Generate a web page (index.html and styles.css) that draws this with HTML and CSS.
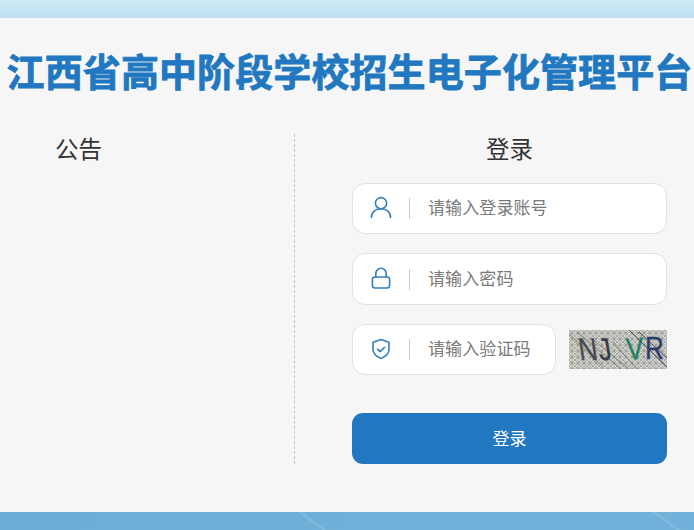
FILE: index.html
```html
<!DOCTYPE html>
<html lang="zh-CN">
<head>
    <meta charset="UTF-8">
    <meta name="viewport" content="width=device-width, initial-scale=1.0">
    <title>江西省高中阶段学校招生电子化管理平台</title>
    <link rel="stylesheet" href="styles.css">
</head>
<body>
    <div class="band band-top"></div>

    <div class="main">
        <h1 class="title">江西省高中阶段学校招生电子化管理平台</h1>

        <div class="columns">
            <div class="notice">
                <h2 class="col-title">公告</h2>
            </div>

            <form class="login">
                <h2 class="col-title">登录</h2>

                <div class="field">
                    <svg class="field-icon" viewBox="0 0 24 24">
                        <circle cx="12" cy="7.200" r="5.600"/>
                        <path d="M2.400 21.500c0-5.400 4.200-8.700 9.600-8.700s9.600 3.300 9.600 8.700"/>
                    </svg>
                    <input type="text" placeholder="请输入登录账号">
                </div>

                <div class="field field-tall">
                    <svg class="field-icon" viewBox="0 0 24 24">
                        <rect x="3.400" y="11" width="17.200" height="11" rx="2.500"/>
                        <path d="M6.800 11V7.500a5.200 5.200 0 0 1 10.400 0V11"/>
                    </svg>
                    <input type="text" placeholder="请输入密码">
                </div>

                <div class="captcha-row">
                    <div class="field">
                        <svg class="field-icon" viewBox="0 0 24 24">
                            <path d="M12 2.500l8 2.800v7c0 4.500-3.400 7.400-8 9.200-4.600-1.800-8-4.700-8-9.200v-7z"/>
                            <path d="M8.500 12.200l2.600 2.400 4.400-4.200"/>
                        </svg>
                        <input type="text" placeholder="请输入验证码">
                    </div>
                    <svg class="captcha" viewBox="0 0 98 39">
                        <defs>
                            <pattern id="mesh" width="6" height="6" patternUnits="userSpaceOnUse">
                                <rect width="6" height="6" fill="#d6d6d0"/>
                                <path d="M0 3h6M3 0v6M0 0l6 6M6 0L0 6" stroke="#8e8e88" stroke-width="0.600"/>
                            </pattern>
                        </defs>
                        <rect width="98" height="39" fill="url(#mesh)"/>
                        <path d="M0 4l34 33M8 2l44 37M22 8l38 31M44 12l24 27" stroke="#5d6858" stroke-width="0.700" fill="none"/>
                        <text class="captcha-char" transform="translate(11 30) skewX(8) scale(1 1.200)" fill="#4b4750" stroke="#4b4750">N</text>
                        <text class="captcha-char" transform="translate(31 30) skewX(10) scale(1 1.200)" fill="#3d3a48" stroke="#3d3a48">J</text>
                        <text class="captcha-char" transform="translate(58 30) rotate(-4) scale(1 1.200)" fill="#1f8161" stroke="#1f8161">V</text>
                        <text class="captcha-char" transform="translate(76 29) scale(1 1.200)" fill="#27406b" stroke="#27406b">R</text>
                        <path d="M60 0l38 37M70 2l28 26" stroke="#4a3a5c" stroke-width="1" fill="none"/>
                    </svg>
                </div>

                <button type="button" class="submit">登录</button>
            </form>
        </div>
    </div>

    <div class="band band-bottom"></div>
</body>
</html>
```

FILE: styles.css
```css
html, body {
    margin: 0;
    height: 100%;
}
body {
    display: flex;
    flex-direction: column;
    height: 530px;
    overflow: hidden;
    font-family: "Noto Sans CJK SC", "Liberation Sans", sans-serif;
    background-color: #f6f6f6;
}
.band {
    height: 18px;
    flex: none;
}
.band-top {
    background: linear-gradient(to bottom, #cbe9f5, #bfe0f0);
}
.band-bottom {
    background:
        linear-gradient(36deg, transparent 44.7%, rgba(255, 255, 255, 0.16) 45.1%, transparent 45.6%),
        linear-gradient(36deg, transparent 94%, rgba(255, 255, 255, 0.14) 94.4%, transparent 94.9%),
        linear-gradient(100deg, #6cadd6 0%, #72b2da 100%);
}
.main {
    flex: 1;
    display: flex;
    flex-direction: column;
}
.title {
    margin: 25px 0 0;
    padding-left: 5px;
    font-size: 38px;
    line-height: 54px;
    font-weight: 700;
    letter-spacing: 0.1px;
    -webkit-text-stroke: 0.8px #2178c0;
    text-align: center;
    white-space: nowrap;
    color: #2178c0;
}
.columns {
    display: flex;
    margin-top: 37px;
    height: 330px;
}
.notice {
    width: 294px;
    border-right: 1px dashed #c4c4c4;
}
.col-title {
    margin: 0;
    font-size: 23.500px;
    line-height: 28px;
    font-weight: 400;
    white-space: nowrap;
    color: #333;
    text-align: center;
}
.notice .col-title {
    width: 47px;
    margin-left: 55px;
}
.login {
    width: 315px;
    margin-left: 57px;
    display: flex;
    flex-direction: column;
}
.login .col-title {
    margin-bottom: 21px;
}
.field {
    display: flex;
    align-items: center;
    height: 51px;
    box-sizing: border-box;
    margin-bottom: 19px;
    background-color: #fff;
    border: 1px solid #e2e2e2;
    border-radius: 13px;
}
.field-tall {
    height: 52px;
}
.field-icon {
    width: 24px;
    height: 24px;
    margin: 0 0 2px 16px;
    flex: none;
    fill: none;
    stroke: #3580bb;
    stroke-width: 1.600;
    stroke-linejoin: round;
    stroke-linecap: round;
}
.field input {
    flex: 1;
    min-width: 0;
    box-sizing: border-box;
    height: 21px;
    margin-left: 16px;
    padding: 0 0 4px 18px;
    border: none;
    border-left: 1px solid #c9c9c9;
    outline: none;
    background: none;
    font-family: inherit;
    font-size: 17px;
    letter-spacing: 0.100px;
    color: #333;
}
.field input::placeholder {
    color: #7a7a7a;
    opacity: 1;
}
.captcha-row {
    display: flex;
    align-items: center;
    gap: 13px;
}
.captcha-row .field {
    flex: 1;
    min-width: 0;
    margin-bottom: 0;
}
.captcha {
    width: 98px;
    height: 39px;
    flex: none;
}
.captcha-char {
    font-family: "Liberation Sans", sans-serif;
    font-size: 26px;
    stroke-width: 0.300;
}
.submit {
    height: 51px;
    margin-top: 38px;
    padding-bottom: 3px;
    border: none;
    border-radius: 11px;
    background-color: #2178c0;
    color: #fff;
    font-family: inherit;
    font-size: 17px;
    cursor: pointer;
}
```
